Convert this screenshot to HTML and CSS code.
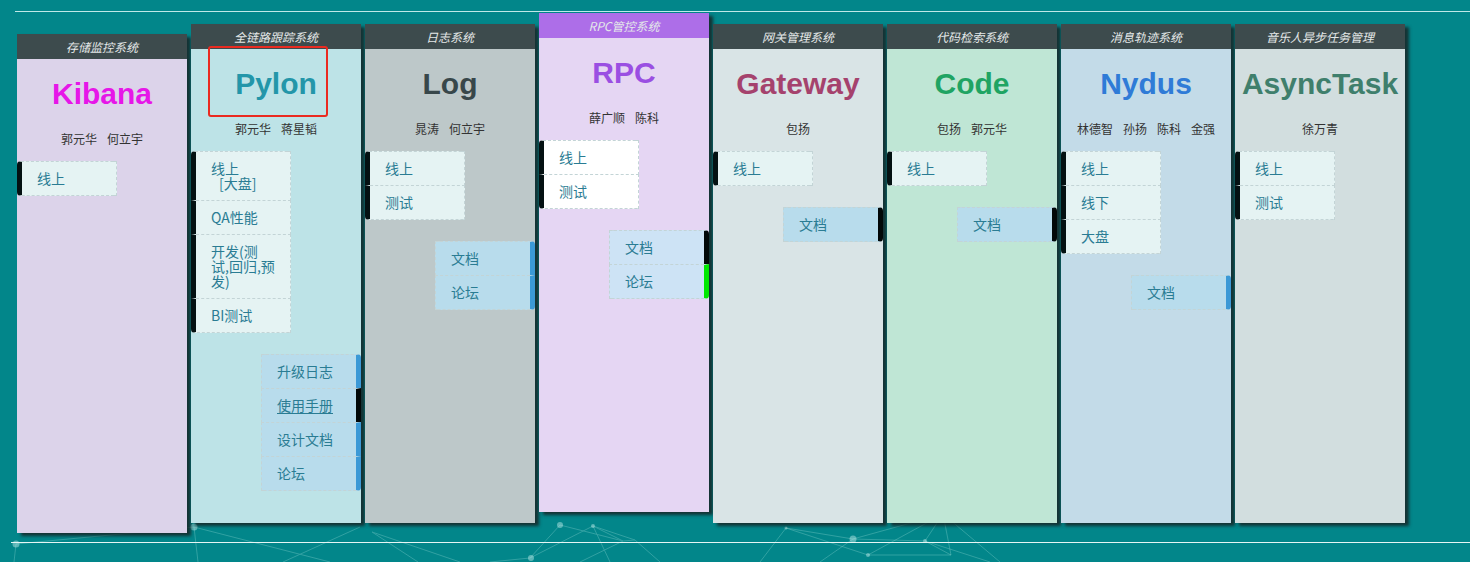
FILE: index.html
```html
<!DOCTYPE html>
<html lang="zh-CN">
<head>
<meta charset="utf-8">
<title>系统导航</title>
<link rel="stylesheet" href="styles.css">
</head>
<body>
<svg class="network" width="1470" height="562" viewBox="0 0 1470 562" aria-hidden="true">
  <g stroke="#9fe0dc" stroke-width="1" opacity="0.3" fill="none">
    <path d="M194 527 L198 562 M194 527 L330 562 M194 527 L16 544 M16 544 L14 562"/>
    <path d="M360 527 L283 562 M372 532 L418 562 M372 532 L460 562"/>
    <path d="M560 525 L530 558 L593 526 L623 541 L560 525 M593 526 L635 540 L623 541 M635 540 L660 562 M593 526 L610 562 M623 541 L580 562 M530 558 L490 562"/>
    <path d="M786 528 L853 539 L925 541 L943 514 L853 539 M786 528 L760 562 M786 528 L868 555 L943 514 L951 555 L925 541 M868 555 L951 555 M853 539 L820 562 M925 541 L990 562 M943 514 L1000 562"/>
  </g>
  <g fill="#c8f0ee" opacity="0.45">
    <circle cx="194" cy="527" r="3.5"/>
    <circle cx="16" cy="544" r="3.5"/>
    <circle cx="560" cy="525" r="3"/>
    <circle cx="531" cy="558" r="3"/>
    <circle cx="593" cy="526" r="2"/>
    <circle cx="853" cy="539" r="3.5"/>
    <circle cx="943" cy="517" r="4"/>
    <circle cx="925" cy="541" r="2"/>
    <circle cx="868" cy="555" r="2"/>
    <circle cx="786" cy="528" r="1.5"/>
  </g>
</svg>

<div class="rule rule-top"></div>

<main class="board">
  <section class="card card-low theme-kibana">
    <header class="card-head">存储监控系统</header>
    <div class="card-body">
      <h2 class="title">Kibana</h2>
      <p class="owners"><span>郭元华</span><span>何立宇</span></p>
      <ul class="links">
        <li class="link">线上</li>
      </ul>
    </div>
  </section>

  <section class="card theme-pylon">
    <header class="card-head">全链路跟踪系统</header>
    <div class="card-body">
      <h2 class="title">Pylon</h2>
      <p class="owners"><span>郭元华</span><span>蒋星韬</span></p>
      <ul class="links">
        <li class="link">线上<br><span class="indent">[大盘]</span></li>
        <li class="link">QA性能</li>
        <li class="link">开发(测<br>试,回归,预<br>发)</li>
        <li class="link">BI测试</li>
      </ul>
      <ul class="docs">
        <li class="doc">升级日志</li>
        <li class="doc doc-dark"><u>使用手册</u></li>
        <li class="doc">设计文档</li>
        <li class="doc">论坛</li>
      </ul>
      <div class="highlight"></div>
    </div>
  </section>

  <section class="card theme-log">
    <header class="card-head">日志系统</header>
    <div class="card-body">
      <h2 class="title">Log</h2>
      <p class="owners"><span>晁涛</span><span>何立宇</span></p>
      <ul class="links">
        <li class="link">线上</li>
        <li class="link">测试</li>
      </ul>
      <ul class="docs">
        <li class="doc">文档</li>
        <li class="doc">论坛</li>
      </ul>
    </div>
  </section>

  <section class="card card-high theme-rpc">
    <header class="card-head">RPC管控系统</header>
    <div class="card-body">
      <h2 class="title">RPC</h2>
      <p class="owners"><span>薛广顺</span><span>陈科</span></p>
      <ul class="links links-white">
        <li class="link">线上</li>
        <li class="link">测试</li>
      </ul>
      <ul class="docs docs-light">
        <li class="doc doc-dark">文档</li>
        <li class="doc doc-green">论坛</li>
      </ul>
    </div>
  </section>

  <section class="card theme-gateway">
    <header class="card-head">网关管理系统</header>
    <div class="card-body">
      <h2 class="title">Gateway</h2>
      <p class="owners"><span>包扬</span></p>
      <ul class="links">
        <li class="link">线上</li>
      </ul>
      <ul class="docs">
        <li class="doc doc-dark">文档</li>
      </ul>
    </div>
  </section>

  <section class="card theme-code">
    <header class="card-head">代码检索系统</header>
    <div class="card-body">
      <h2 class="title">Code</h2>
      <p class="owners"><span>包扬</span><span>郭元华</span></p>
      <ul class="links">
        <li class="link">线上</li>
      </ul>
      <ul class="docs">
        <li class="doc doc-dark">文档</li>
      </ul>
    </div>
  </section>

  <section class="card theme-nydus">
    <header class="card-head">消息轨迹系统</header>
    <div class="card-body">
      <h2 class="title">Nydus</h2>
      <p class="owners"><span>林德智</span><span>孙扬</span><span>陈科</span><span>金强</span></p>
      <ul class="links">
        <li class="link">线上</li>
        <li class="link">线下</li>
        <li class="link">大盘</li>
      </ul>
      <ul class="docs">
        <li class="doc">文档</li>
      </ul>
    </div>
  </section>

  <section class="card theme-async">
    <header class="card-head">音乐人异步任务管理</header>
    <div class="card-body">
      <h2 class="title">AsyncTask</h2>
      <p class="owners"><span>徐万青</span></p>
      <ul class="links">
        <li class="link">线上</li>
        <li class="link">测试</li>
      </ul>
    </div>
  </section>
</main>

<div class="rule rule-bottom"></div>
</body>
</html>
```

FILE: styles.css
```css
html, body {
  margin: 0;
  padding: 0;
}

body {
  width: 1470px;
  height: 562px;
  overflow: hidden;
  background: #02868a;
  font-family: "Noto Sans CJK SC", "Noto Sans", sans-serif;
  position: relative;
}

.network {
  position: absolute;
  left: 0;
  top: 0;
  z-index: 0;
}

.rule {
  position: relative;
  z-index: 1;
  height: 1px;
  margin-left: 15px;
  background: #bfe9e8;
}

.rule-top {
  margin-top: 11px;
}

.rule-bottom {
  margin-top: 9px;
  margin-left: 11px;
  background: #e6f6f5;
}

.board {
  position: relative;
  z-index: 1;
  display: flex;
  align-items: flex-start;
  gap: 4px;
  padding-left: 17px;
}

.card {
  width: 170px;
  height: 499px;
  margin-top: 12px;
  display: flex;
  flex-direction: column;
  box-shadow: 4px 3px 3px rgba(24, 36, 38, 0.85);
}

.card-low {
  margin-top: 22px;
}

.card-high {
  margin-top: 1px;
}

.card-head {
  height: 25px;
  line-height: 25px;
  background: #3d4b4d;
  color: #e4e8e8;
  font-size: 12px;
  font-style: italic;
  text-align: center;
  white-space: nowrap;
}

.card-body {
  position: relative;
  flex: 1;
  padding-top: 18px;
}

.title {
  margin: 0;
  font-family: "Liberation Sans", Arial, sans-serif;
  font-weight: bold;
  font-size: 30px;
  line-height: 34px;
  text-align: center;
  white-space: nowrap;
}

.owners {
  margin: 19px 0 0;
  height: 18px;
  line-height: 18px;
  font-size: 12px;
  color: #333;
  text-align: center;
}

.owners span {
  margin: 0 5px;
}

.links, .docs {
  list-style: none;
  margin: 0;
  padding: 0;
  width: 100px;
}

.links {
  margin-top: 13px;
}

.docs {
  margin-top: 21px;
  margin-left: auto;
}

.link, .doc {
  box-sizing: border-box;
  font-size: 14px;
  line-height: 15px;
  color: #2a7c93;
  padding: 9px 8px 9px 15px;
  border: 1px dashed #c3d4d6;
  background: #e5f3f3;
  white-space: nowrap;
}

.link {
  border-left: 5px solid #041112;
  border-radius: 4px 0 0 4px;
}

.doc {
  background: #b8dcec;
  border-right: 5px solid #3b99d6;
  padding-left: 15px;
  border-radius: 0 4px 4px 0;
}

.link + .link,
.doc + .doc {
  margin-top: -1px;
}

.link:not(:last-child),
.doc:not(:last-child) {
  border-bottom-left-radius: 0;
  border-bottom-right-radius: 0;
}

.link:not(:first-child),
.doc:not(:first-child) {
  border-top-left-radius: 0;
  border-top-right-radius: 0;
}

.indent {
  padding-left: 8px;
}

.links-white .link {
  background: #ffffff;
}

.docs-light .doc {
  background: #cde3f5;
}

.doc-dark {
  border-right-color: #020808;
}

.doc-green {
  border-right-color: #00e800;
}

.doc u {
  text-underline-offset: 2px;
}

.highlight {
  position: absolute;
  left: 17px;
  top: -3px;
  width: 116px;
  height: 67px;
  border: 2px solid #ea2a20;
  border-radius: 3px;
}

/* themes */
.theme-kibana .card-body { background: #dcd3ea; }
.theme-kibana .title { color: #e616e8; }

.theme-pylon .card-body { background: #bde3e7; }
.theme-pylon .title { color: #2396a9; }

.theme-log .card-body { background: #bdc8c9; }
.theme-log .title { color: #38474a; }

.theme-rpc .card-head { background: #ad6ee8; }
.theme-rpc .card-body { background: #e5d6f3; }
.theme-rpc .title { color: #9a4fe2; }

.theme-gateway .card-body { background: #d9e4e6; }
.theme-gateway .title { color: #a5426d; }

.theme-code .card-body { background: #bfe6d5; }
.theme-code .title { color: #1fa463; }

.theme-nydus .card-body { background: #c3dbe8; }
.theme-nydus .title { color: #2f7bd7; }

.theme-async .card-body { background: #d2dedf; }
.theme-async .title { color: #3f7f6c; }
```
